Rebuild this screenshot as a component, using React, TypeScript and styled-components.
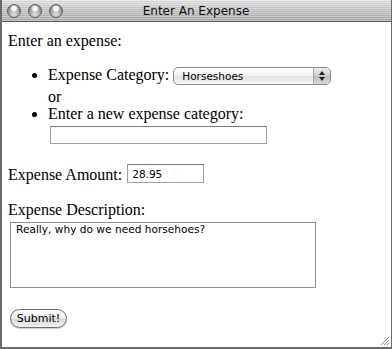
import styled, { createGlobalStyle } from 'styled-components';

const GlobalStyle = createGlobalStyle`
    html, body {
        margin: 0;
        padding: 0;
        background: #ffffff;
    }
`

const categories = ['Horseshoes', 'Saddles', 'Hay']

export default function App() {
    return (
        <>
            <GlobalStyle />
            <Window>
                <TitleBar>
                    <Lights>
                        <Light />
                        <Light />
                        <Light />
                    </Lights>
                    <Title>Enter An Expense</Title>
                </TitleBar>
                <Content>
                    <Para>Enter an expense:</Para>
                    <List>
                        <Item $gap={3}>
                            Expense Category:{' '}
                            <Select>
                                <span>{categories[0]}</span>
                                <Stepper>
                                    <svg width="6" height="10" viewBox="0 0 6 10">
                                        <path d="M3 0 L6 4 L0 4 Z" fill="#222" />
                                        <path d="M3 10 L6 6 L0 6 Z" fill="#222" />
                                    </svg>
                                </Stepper>
                            </Select>
                        </Item>
                        <Or>or</Or>
                        <Item $gap={0}>
                            Enter a new expense category:
                            <NewCategory />
                        </Item>
                    </List>
                    <Field>
                        <span>Expense Amount:</span>
                        <Amount defaultValue="28.95" />
                    </Field>
                    <Label>Expense Description:</Label>
                    <TextArea defaultValue="Really, why do we need horsehoes?" />
                    <Submit>Submit!</Submit>
                </Content>
                <Grip>
                    <svg width="12" height="12" viewBox="0 0 12 12">
                        <path d="M11 3 L3 11 M11 6 L6 11 M11 9 L9 11" stroke="#8a8a8a" strokeWidth="1" />
                    </svg>
                </Grip>
            </Window>
        </>
    );
}

const Window = styled.div`
    position: relative;
    box-sizing: border-box;
    width: 392px;
    height: 349px;
    border: 1px solid #6b6b6b;
    border-top: none;
    border-left-width: 2px;
    border-bottom-width: 2px;
    background: #ffffff;
    overflow: hidden;
`
const TitleBar = styled.div`
    display: flex;
    align-items: center;
    height: 21px;
    margin: 0 -1px 0 -2px;
    border-bottom: 1px solid #5a5a5a;
    background:
        repeating-linear-gradient(180deg, rgba(255,255,255,0.3) 0 1px, rgba(0,0,0,0.04) 1px 2px),
        linear-gradient(180deg, #e2e2e2 0%, #c4c4c4 45%, #acacac 100%);
    position: relative;
`
const Lights = styled.div`
    display: flex;
    gap: 7px;
    padding-left: 7px;
`
const Light = styled.span`
    width: 14px;
    height: 14px;
    border-radius: 50%;
    box-sizing: border-box;
    border: 1px solid #5c5c5c;
    background:
        radial-gradient(circle at 50% 28%, rgba(255,255,255,0.95) 0 18%, rgba(255,255,255,0) 42%),
        radial-gradient(circle at 50% 80%, #e2e2e2 0%, #9a9a9a 55%, #6e6e6e 100%);
`
const Title = styled.div`
    position: absolute;
    left: 0;
    right: 0;
    text-align: center;
    font-family: "DejaVu Sans", sans-serif;
    font-size: 12px;
    color: #111;
    pointer-events: none;
`
const Content = styled.div`
    padding: 10px 0 0 6px;
    font-family: "Liberation Serif", serif;
    font-size: 16px;
    line-height: 18px;
    color: #000;
`
const Para = styled.p`
    margin: 0 0 16px;
`
const List = styled.ul`
    margin: 0 0 22px;
    padding-left: 40px;
    list-style: disc;
`
const Item = styled.li<{ $gap: number }>`
    margin: 0 0 ${p => p.$gap}px;
`
const Or = styled.div`
    height: 17px;
`
const Select = styled.span`
    display: inline-flex;
    align-items: center;
    justify-content: space-between;
    box-sizing: border-box;
    width: 158px;
    height: 18px;
    vertical-align: baseline;
    padding-left: 8px;
    border: 1px solid #8a8a8a;
    border-radius: 5px;
    background: linear-gradient(180deg, #ffffff 0%, #f1f1f1 50%, #e2e2e2 51%, #f6f6f6 100%);
    font-family: "DejaVu Sans", sans-serif;
    font-size: 10.5px;
    line-height: 16px;
    color: #000;
    overflow: hidden;
`
const Stepper = styled.span`
    display: flex;
    align-items: center;
    justify-content: center;
    width: 16px;
    height: 100%;
    border-left: 1px solid #a8a8a8;
    background: linear-gradient(180deg, #ececec 0%, #cfcfcf 50%, #bcbcbc 51%, #dcdcdc 100%);
`
const TextField = styled.input`
    box-sizing: border-box;
    height: 19px;
    padding: 1px 4px;
    border: 1px solid #a0a0a0;
    border-top-color: #7a7a7a;
    background: #fff;
    font-family: "DejaVu Sans", sans-serif;
    font-size: 10.5px;
    color: #000;
    outline: none;
`
const NewCategory = styled(TextField)`
    display: block;
    width: 217px;
    height: 18px;
    margin: 3px 0 0 2px;
`
const Amount = styled(TextField)`
    width: 77px;
    margin: -2px 0 0 5px;
`
const Field = styled.div`
    display: flex;
    align-items: flex-start;
    height: 18px;
    margin: 0 0 17px;
`
const Label = styled.div`
    margin: 0;
`
const TextArea = styled.textarea`
    display: block;
    box-sizing: border-box;
    width: 306px;
    height: 66px;
    margin: 3px 0 0 2px;
    padding: 0 5px;
    border: 1px solid #8f8f8f;
    resize: none;
    font-family: "DejaVu Sans", sans-serif;
    font-size: 10.6px;
    line-height: 13px;
    color: #000;
    outline: none;
`
const Submit = styled.button`
    display: block;
    box-sizing: border-box;
    margin: 21px 0 0 2px;
    width: 57px;
    height: 19px;
    padding: 0;
    border: 1px solid #707070;
    border-radius: 10px;
    background: linear-gradient(180deg, #ffffff 0%, #f0f0f0 45%, #d8d8d8 55%, #f2f2f2 100%);
    box-shadow: 0 1px 1px rgba(0,0,0,0.2);
    font-family: "DejaVu Sans", sans-serif;
    font-size: 11px;
    color: #000;
`
const Grip = styled.div`
    position: absolute;
    right: 1px;
    bottom: 1px;
    width: 12px;
    height: 12px;
    line-height: 0;
`
